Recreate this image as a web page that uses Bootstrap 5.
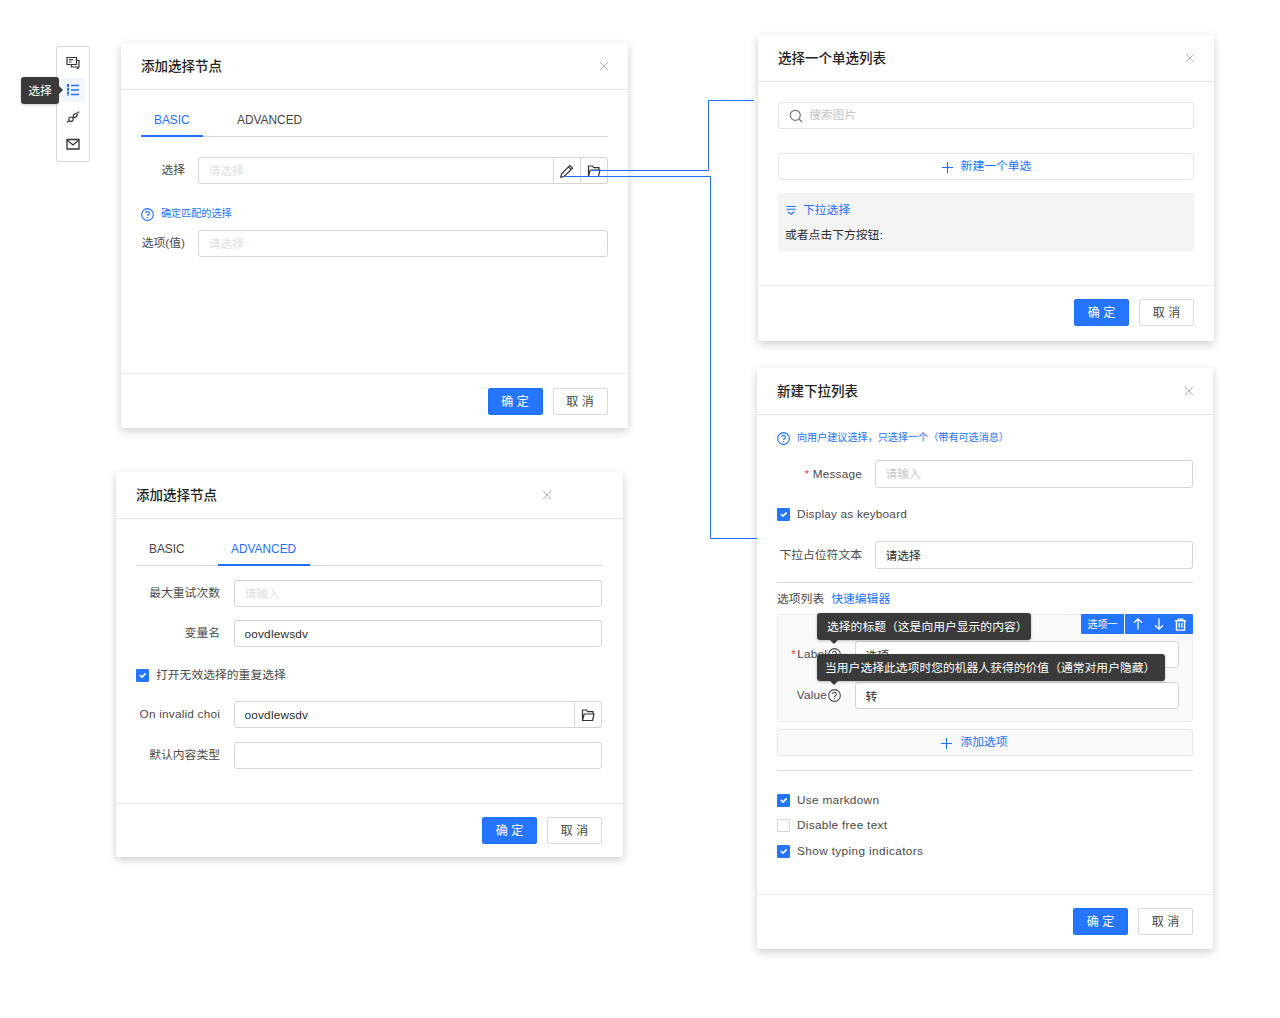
<!doctype html>
<html lang="zh">
<head>
<meta charset="utf-8">
<title>选择节点</title>
<link rel="stylesheet" href="https://cdn.jsdelivr.net/npm/bootstrap@5.3.0/dist/css/bootstrap.min.css">
<style>
:root{--blue:#1f6fff;--line:#d9d9d9;--ink:#3c3c3c;}
html,body{margin:0;background:#fff;}
body{font-family:"Liberation Sans","Noto Sans CJK SC",sans-serif;font-size:11.8px;color:var(--ink);}
.stage{position:relative;width:1280px;height:1018px;overflow:hidden;}
.ico{display:block;fill:none;stroke:currentColor;stroke-width:1.2;flex:none;}
.lat{letter-spacing:.2px;}
.lat2{letter-spacing:.3px;}
.lat3{letter-spacing:.38px;}
/* windows on the canvas */
.dlg{position:absolute;border:0;border-radius:3px;background:#fff;box-shadow:0 3px 10px rgba(0,0,0,.2);color:var(--ink);font-size:11.8px;}
.dlg-a{left:121px;top:43px;width:507px;height:385px;}
.dlg-d{left:116px;top:472px;width:507px;height:385px;}
.dlg-b{left:758px;top:35px;width:456px;height:306px;}
.dlg-c{left:757px;top:368px;width:456px;height:581px;}
.dlg .card-header{height:47px;padding:2px 20px 0;background:#fff;border-bottom:1px solid #e4e4e4;border-radius:3px 3px 0 0;}
.dlg-title{font-size:13.5px;font-weight:500;color:#222;}
.x-btn{color:#b4b4b4;stroke-width:1;margin-top:-2px;margin-right:-.5px;}
.x-btn.x-shift{margin-right:51px;}
.dlg .card-body{padding:0 20px;flex:1 1 auto;}
.dlg .card-footer{height:55px;padding:13px 20px 0;background:#fff;border-top:1px solid #ececec;gap:10px;border-radius:0 0 3px 3px;}
.dlg-a .card-body{padding-right:20.5px;}
.dlg-a .card-footer{padding:14px 20.5px 0 20px;}
.dlg-d .card-body{padding-right:21px;}
.dlg-d .card-footer{height:54px;padding:13px 21px 0 20px;}
.dlg-b .card-footer{height:56px;}
.btn-ok,.btn-no{width:55px;height:27px;padding:0;font-size:12px;border-radius:2px;line-height:27px;}
.btn-ok{background:#2675ff;border:1px solid #1f6fff;color:#fff;}
.btn-no{background:#fff;border:1px solid #d9d9d9;color:#444;}
/* tabs */
.tab-row{margin-top:18px;height:29px;border-bottom:1px solid #d4d4d4;gap:21px;}
.tab-item{height:29px;padding:1px 13px 0;line-height:22px;color:#444;font-size:11.9px;text-decoration:none;white-space:nowrap;}
.tab-item.on{color:var(--blue);border-bottom:2px solid var(--blue);}
.tab-w1{width:62px;}
.tab-w0{width:61px;}
.tab-w2{width:92px;}
/* fields */
.fld{height:27px;font-size:11.8px;padding:0 9.500px;border:1px solid #d4d4d4;border-radius:3px;color:#2b2b2b;box-shadow:none;background:#fff;}
.fld::placeholder{color:#c8c8c8;}
.fld.dim::placeholder{color:#e0e0e0;}
.lab{flex:none;text-align:right;color:#4a4a4a;margin-right:13px;white-space:nowrap;}
.lab-a{width:44px;}
.lab-d{width:84px;margin-right:14px;}
.lab-c{width:85px;padding-top:2px;}
.req{color:#f04545;}
.input-group>.addon{width:27px;height:27px;flex:none;border:1px solid #d4d4d4;border-left:0;background:#fff;color:#333;display:flex;align-items:center;justify-content:center;padding:0;margin-left:0!important;}
.input-group>.addon:last-child{border-radius:0 3px 3px 0;}
.input-group>.fld{border-radius:3px 0 0 3px;}
.hint{color:var(--blue);font-size:10.1px;line-height:14px;gap:7px;}
.hint .ico{color:var(--blue);}
.m-a1{margin-top:20px;}
.m-a2{margin-top:23px;}
.m-a3{margin-top:9px;}
.m-14{margin-top:14px;}
.m-13{margin-top:13px;}
.m-19{margin-top:19px;}
.m-21{margin-top:21px;}
.m-20{margin-top:20px;}
.chk{gap:7px;line-height:14px;color:#4a4a4a;}
.chk .form-check-input{width:13px;height:13px;margin:0;border-radius:1px;border:1px solid #d4d4d4;flex:none;float:none;box-shadow:none;}
.chk .form-check-input:checked{background-color:#2675ff;border-color:#2675ff;}
/* B */
.srch{height:27px;border:1px solid #e2e2e2;border-radius:3px;padding:0 10px;gap:6px;color:#c4c4c4;}
.srch span{padding-top:1px;}
.srch .ico{color:#777;}
.add-btn{height:27px;width:100%;border:1px solid #e6e6e6;border-radius:3px;background:#fff;color:var(--blue);font-size:11.8px;padding:1px 0 0;gap:7px;}
.add-grey{background:#fafafa;padding-right:22px;}
.m-24{margin-top:24px;}
.panel-grey{height:58px;background:#f4f4f4;border-radius:3px;padding:9px 7px 0;}
.panel-link{color:var(--blue);gap:6px;height:16px;line-height:16px;}
.panel-txt{margin-top:9px;line-height:16px;color:#2e2e2e;}
/* C */
.c-hint{margin-top:16px;}
.c-msg{margin-top:15px;}
.fld.t28{height:28px;padding-bottom:1px;}
.c-chk1{margin-top:19px;}
.c-ph{margin-top:20px;}
.sep{height:1px;background:#d9d9d9;}
.c-sep1{margin-top:13px;}
.c-sect{margin-top:8px;line-height:16px;gap:7px;color:#4a4a4a;}
.c-sect a{color:var(--blue);text-decoration:none;}
.opt-box{position:relative;margin-top:7px;height:108px;border:1px solid #ececec;border-radius:3px;background:#fafafa;padding:26px 13px 0 0;}
.opt-row{height:27px;}
.opt-row+.opt-row{margin-top:14px;}
.opt-lab{width:63px;flex:none;margin-right:14px;display:flex;justify-content:flex-end;align-items:center;gap:1px;color:#4a4a4a;}
.opt-tag{position:absolute;right:-1px;top:-1px;height:20px;display:flex;gap:1px;color:#fff;font-size:10px;}
.opt-tag>div{background:#2675ff;height:20px;display:flex;align-items:center;justify-content:center;border-radius:1px;}
.opt-tag .ico{stroke-width:1.3;}
.tag-a{width:43px;}
.tag-b{width:68px;gap:9px;}
.tipbox{position:absolute;left:39px;height:27px;background:#3a3a3a;color:#fff;border-radius:3px;line-height:28px;white-space:nowrap;box-shadow:0 1px 3px rgba(0,0,0,.25);}
.tipbox::after{content:"";position:absolute;left:13px;bottom:-4px;border:4px solid transparent;border-bottom:0;border-top-color:#3a3a3a;}
.tip-1{top:-2px;width:214px;padding-left:10px;}
.tip-2{top:39px;width:348px;padding-left:8px;}
.c-add{margin-top:7px;}
.c-sep2{margin-top:14px;}
.c-c1{margin-top:22px;}
.c-c2{margin-top:11px;}
.c-c3{margin-top:12px;}
/* toolbar */
.rail{position:absolute;left:56px;top:46px;width:34px;height:116px;border:1px solid #d9d9d9;border-radius:2px;background:#fff;padding:4px;}
.rail-item{width:24px;height:24px;display:flex;align-items:center;justify-content:center;margin-bottom:3px;color:#333;border-radius:2px;}
.rail-item.on{background:#f1f6ff;color:var(--blue);}
.rail-tip{position:absolute;left:21px;top:77px;width:38px;height:27px;background:#3a3a3a;color:#fff;border-radius:3px;line-height:28px;text-align:center;box-shadow:0 1px 3px rgba(0,0,0,.2);z-index:2;}
.rail-tip::after{content:"";position:absolute;right:-4px;top:9px;border:4px solid transparent;border-right:0;border-left-color:#3a3a3a;}
.wires{position:absolute;left:0;top:0;z-index:5;pointer-events:none;}
</style>
</head>
<body>
<svg width="0" height="0" class="position-absolute">
<defs>
<symbol id="i-x" viewBox="0 0 10 10"><path d="M1 1l8 8M9 1l-8 8"/></symbol>
<symbol id="i-q" viewBox="0 0 14 14"><circle cx="7" cy="7" r="6.300"/><path d="M5 5.500a2 2 0 1 1 3 1.700c-.7.400-1 .8-1 1.400"/><path d="M7 9.700v1.200"/></symbol>
<symbol id="i-folder" viewBox="0 0 14 14"><path d="M1.500 12.500V2h4l1.200 1.600h5.300V6M1.500 12.500h10L13 6H3.200z"/></symbol>
<symbol id="i-pen" viewBox="0 0 14 14"><path d="M.8 13.200l.8-3.300L9.800 1.500l2.700 2.700-8.400 8.300zM8.500 2.900l2.700 2.700"/></symbol>
<symbol id="i-plus" viewBox="0 0 14 14"><path d="M7 1v12M1 7h12"/></symbol>
<symbol id="i-search" viewBox="0 0 14 14"><circle cx="6.300" cy="6.300" r="5"/><path d="M10 10l3 3"/></symbol>
<symbol id="i-chat" viewBox="0 0 14 14"><path d="M1 1.500h9.500v7H1z"/><path d="M3 3.700h4M3 6h2.500"/><path d="M11 4.500h2v6.500H5.500V9"/><path d="M12 11v1.500h-1.500" /></symbol>
<symbol id="i-list" viewBox="0 0 14 14"><path d="M5 2.500h8M5 7h8M5 11.500h8" stroke-width="1.400"/><path d="M2 1v12" stroke-width="2" stroke-dasharray="3 .8"/></symbol>
<symbol id="i-plug" viewBox="0 0 14 14"><path d="M.8 12.200l2-1.200M13.200 1.800l-2 1.200"/><circle cx="5" cy="9.200" r="2.200"/><path d="M7.200 6.800l.3-2 2.500-1.600 1.400 1.700-1.800 2.400-2 .1z"/></symbol>
<symbol id="i-mail" viewBox="0 0 14 14"><path d="M1 2.500h12v9.500H1z" stroke-width="1.300"/><path d="M1 3l6 5 6-5" stroke-width="1.300"/></symbol>
<symbol id="i-drop" viewBox="0 0 14 14"><path d="M1.500 3h11M1.500 6h11M3 9l4 3 4-3"/></symbol>
<symbol id="i-up" viewBox="0 0 12 12"><path d="M6 11.500V.8M2 4.800L6 .8l4 4"/></symbol>
<symbol id="i-down" viewBox="0 0 12 12"><path d="M6 .5v10.700M2 7.200l4 4 4-4"/></symbol>
<symbol id="i-trash" viewBox="0 0 12 12"><path d="M.8 2.500h10.400M4 2.500V1h4v1.500M2.300 2.500V11.200h7.400V2.500M4.800 4.500v4.500M7.200 4.500v4.500"/></symbol>
</defs>
</svg>

<main class="stage">

  <nav class="rail">
    <div class="rail-item"><svg class="ico" width="14" height="14"><use href="#i-chat"/></svg></div>
    <div class="rail-item on"><svg class="ico" width="14" height="14"><use href="#i-list"/></svg></div>
    <div class="rail-item"><svg class="ico" width="14" height="14"><use href="#i-plug"/></svg></div>
    <div class="rail-item"><svg class="ico" width="14" height="14"><use href="#i-mail"/></svg></div>
  </nav>
  <div class="rail-tip">选择</div>

  <section class="card dlg dlg-a">
    <div class="card-header d-flex align-items-center justify-content-between">
      <span class="dlg-title">添加选择节点</span>
      <svg class="ico x-btn" width="10" height="10"><use href="#i-x"/></svg>
    </div>
    <div class="card-body">
      <div class="tab-row d-flex">
        <a class="tab-item tab-w1 on" href="#">BASIC</a>
        <a class="tab-item" href="#">ADVANCED</a>
      </div>
      <div class="d-flex align-items-center m-a1">
        <label class="lab lab-a">选择</label>
        <div class="input-group flex-grow-1">
          <input class="form-control fld dim" placeholder="请选择">
          <button class="addon" type="button"><svg class="ico" width="14" height="14"><use href="#i-pen"/></svg></button>
          <button class="addon" type="button"><svg class="ico" width="14" height="14"><use href="#i-folder"/></svg></button>
        </div>
      </div>
      <div class="hint d-flex align-items-center m-a2">
        <svg class="ico" width="13" height="13"><use href="#i-q"/></svg>
        <span>确定匹配的选择</span>
      </div>
      <div class="d-flex align-items-center m-a3">
        <label class="lab lab-a">选项(值)</label>
        <input class="form-control fld dim" placeholder="请选择">
      </div>
    </div>
    <div class="card-footer d-flex justify-content-end">
      <button class="btn btn-ok" type="button">确 定</button>
      <button class="btn btn-no" type="button">取 消</button>
    </div>
  </section>

  <section class="card dlg dlg-d">
    <div class="card-header d-flex align-items-center justify-content-between">
      <span class="dlg-title">添加选择节点</span>
      <svg class="ico x-btn x-shift" width="10" height="10"><use href="#i-x"/></svg>
    </div>
    <div class="card-body">
      <div class="tab-row d-flex">
        <a class="tab-item tab-w0" href="#">BASIC</a>
        <a class="tab-item tab-w2 on" href="#">ADVANCED</a>
      </div>
      <div class="d-flex align-items-center m-14">
        <label class="lab lab-d">最大重试次数</label>
        <input class="form-control fld dim" placeholder="请输入">
      </div>
      <div class="d-flex align-items-center m-13">
        <label class="lab lab-d">变量名</label>
        <input class="form-control fld lat" value="oovdlewsdv">
      </div>
      <div class="chk d-flex align-items-center m-21">
        <input class="form-check-input" type="checkbox" checked>
        <span>打开无效选择的重复选择</span>
      </div>
      <div class="d-flex align-items-center m-19">
        <label class="lab lab-d lat">On invalid choi</label>
        <div class="input-group flex-grow-1">
          <input class="form-control fld lat" value="oovdlewsdv">
          <button class="addon" type="button"><svg class="ico" width="14" height="14"><use href="#i-folder"/></svg></button>
        </div>
      </div>
      <div class="d-flex align-items-center m-14">
        <label class="lab lab-d">默认内容类型</label>
        <input class="form-control fld">
      </div>
    </div>
    <div class="card-footer d-flex justify-content-end">
      <button class="btn btn-ok" type="button">确 定</button>
      <button class="btn btn-no" type="button">取 消</button>
    </div>
  </section>

  <section class="card dlg dlg-b">
    <div class="card-header d-flex align-items-center justify-content-between">
      <span class="dlg-title">选择一个单选列表</span>
      <svg class="ico x-btn" width="10" height="10"><use href="#i-x"/></svg>
    </div>
    <div class="card-body">
      <div class="srch d-flex align-items-center m-20">
        <svg class="ico" width="14" height="14"><use href="#i-search"/></svg>
        <span>搜索图片</span>
      </div>
      <button class="add-btn d-flex align-items-center justify-content-center m-24" type="button">
        <svg class="ico" width="13" height="13"><use href="#i-plus"/></svg>新建一个单选
      </button>
      <div class="panel-grey m-13">
        <div class="panel-link d-flex align-items-center">
          <svg class="ico" width="12" height="12"><use href="#i-drop"/></svg><span>下拉选择</span>
        </div>
        <div class="panel-txt">或者点击下方按钮:</div>
      </div>
    </div>
    <div class="card-footer d-flex justify-content-end">
      <button class="btn btn-ok" type="button">确 定</button>
      <button class="btn btn-no" type="button">取 消</button>
    </div>
  </section>

  <section class="card dlg dlg-c">
    <div class="card-header d-flex align-items-center justify-content-between">
      <span class="dlg-title">新建下拉列表</span>
      <svg class="ico x-btn" width="10" height="10"><use href="#i-x"/></svg>
    </div>
    <div class="card-body">
      <div class="hint d-flex align-items-center c-hint">
        <svg class="ico" width="13" height="13"><use href="#i-q"/></svg>
        <span>向用户建议选择，只选择一个（带有可选消息）</span>
      </div>
      <div class="d-flex align-items-center c-msg">
        <label class="lab lab-c lat"><span class="req">*</span> Message</label>
        <input class="form-control fld t28" placeholder="请输入">
      </div>
      <div class="chk d-flex align-items-center c-chk1">
        <input class="form-check-input" type="checkbox" checked>
        <span class="lat">Display as keyboard</span>
      </div>
      <div class="d-flex align-items-center c-ph">
        <label class="lab lab-c">下拉占位符文本</label>
        <input class="form-control fld t28" value="请选择">
      </div>
      <div class="sep c-sep1"></div>
      <div class="c-sect d-flex">
        <span>选项列表</span><a href="#">快速编辑器</a>
      </div>
      <div class="opt-box">
        <div class="opt-row d-flex align-items-center">
          <div class="opt-lab lat"><span class="req">*</span><span>Label</span><svg class="ico" width="13" height="13"><use href="#i-q"/></svg></div>
          <input class="form-control fld" value="选项">
        </div>
        <div class="opt-row d-flex align-items-center">
          <div class="opt-lab lat"><span>Value</span><svg class="ico" width="13" height="13"><use href="#i-q"/></svg></div>
          <input class="form-control fld" value="转">
        </div>
        <div class="opt-tag">
          <div class="tag-a">选项一</div>
          <div class="tag-b">
            <svg class="ico" width="12" height="12"><use href="#i-up"/></svg>
            <svg class="ico" width="12" height="12"><use href="#i-down"/></svg>
            <svg class="ico" width="13" height="13"><use href="#i-trash"/></svg>
          </div>
        </div>
        <div class="tipbox tip-1">选择的标题（这是向用户显示的内容）</div>
        <div class="tipbox tip-2">当用户选择此选项时您的机器人获得的价值（通常对用户隐藏）</div>
      </div>
      <button class="add-btn add-grey d-flex align-items-center justify-content-center c-add" type="button">
        <svg class="ico" width="13" height="13"><use href="#i-plus"/></svg>添加选项
      </button>
      <div class="sep c-sep2"></div>
      <div class="chk d-flex align-items-center c-c1">
        <input class="form-check-input" type="checkbox" checked><span class="lat2">Use markdown</span>
      </div>
      <div class="chk d-flex align-items-center c-c2">
        <input class="form-check-input" type="checkbox"><span class="lat2">Disable free text</span>
      </div>
      <div class="chk d-flex align-items-center c-c3">
        <input class="form-check-input" type="checkbox" checked><span class="lat3">Show typing indicators</span>
      </div>
    </div>
    <div class="card-footer d-flex justify-content-end">
      <button class="btn btn-ok" type="button">确 定</button>
      <button class="btn btn-no" type="button">取 消</button>
    </div>
  </section>

  <svg class="wires" width="1280" height="1018" fill="none" stroke="#1f6fff" stroke-width="1">
    <path d="M592 170.500H708.500V100.500H754"/>
    <path d="M564 176.500H710.500V538.500H757"/>
  </svg>
</main>

<script src="https://cdn.jsdelivr.net/npm/bootstrap@5.3.0/dist/js/bootstrap.bundle.min.js"></script>
</body>
</html>
